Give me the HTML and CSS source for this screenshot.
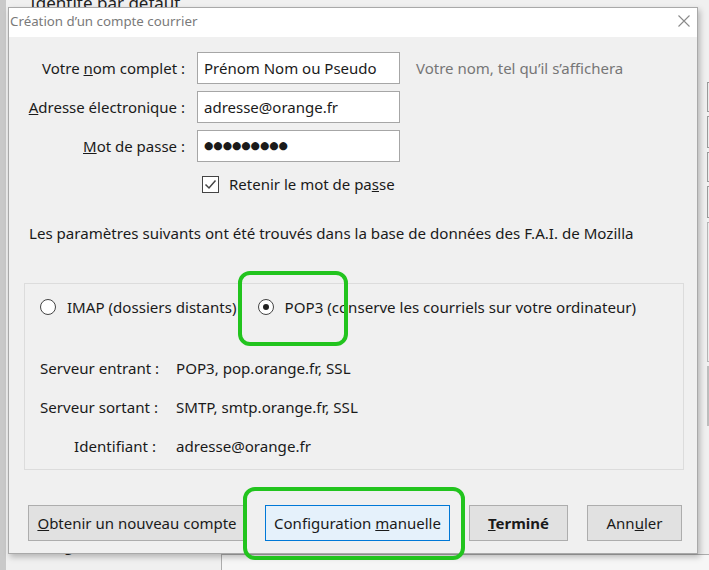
FILE: index.html
```html
<!DOCTYPE html>
<html lang="fr">
<head>
<meta charset="utf-8">
<title>Création d'un compte courrier</title>
<link rel="stylesheet" href="styles.css">
</head>
<body>
<div class="desktop">
  <div class="under">
    <div class="under-top">Identité par défaut</div>
    <div class="under-right">
      <div class="ubox b1"></div>
      <div class="ubox b2"></div>
      <div class="ubox b3"></div>
      <div class="ubox b4"></div>
      <div class="ubox b5"></div>
      <div class="ubox b6"></div>
    </div>
    <div class="under-bottom">
      <span class="ulabel">Si<u>g</u>nature (texte)</span>
      <div class="ufield"></div>
    </div>
  </div>

  <div class="dialog">
    <div class="titlebar">
      <span class="title">Création d’un compte courrier</span>
      <svg class="close" width="12" height="12" viewBox="0 0 12 12"><path d="M0.5 0.5 L11.5 11.5 M11.5 0.5 L0.5 11.5" stroke="#8a8a8a" stroke-width="1.1" fill="none"/></svg>
    </div>
    <div class="body">
      <div class="form">
        <label class="lbl">Votre <u>n</u>om complet :</label>
        <div class="input">Prénom Nom ou Pseudo</div>
        <span class="hint">Votre nom, tel qu’il s’affichera</span>
        <label class="lbl"><u>A</u>dresse électronique :</label>
        <div class="input">adresse@orange.fr</div>
        <span></span>
        <label class="lbl"><u>M</u>ot de passe :</label>
        <div class="input pw">●●●●●●●●●</div>
        <span></span>
      </div>
      <div class="checkrow">
        <span class="checkbox"><svg width="15" height="15" viewBox="0 0 15 15"><path d="M2.5 7.5 L6 11 L12.5 3.5" stroke="#444" stroke-width="1.5" fill="none"/></svg></span>
        <span>Retenir le mot de pa<u>s</u>se</span>
      </div>
      <p class="info">Les paramètres suivants ont été trouvés dans la base de données des F.A.I. de Mozilla</p>
      <div class="group">
        <div class="radios">
          <span class="radio"></span><span class="rtext">IMAP (dossiers distants)</span>
          <span class="radio on"></span><span class="rtext">POP3 (conserve les courriels sur votre ordinateur)</span>
        </div>
        <div class="details">
          <span class="dl">Serveur entrant :</span><span>POP3, pop.orange.fr, SSL</span>
          <span class="dl">Serveur sortant :</span><span>SMTP, smtp.orange.fr, SSL</span>
          <span class="dl">Identifiant :</span><span>adresse@orange.fr</span>
        </div>
      </div>
      <div class="buttons">
        <button class="btn wide"><u>O</u>btenir un nouveau compte</button>
        <button class="btn focus">Configuration <u>m</u>anuelle</button>
        <button class="btn bold"><u>T</u>erminé</button>
        <button class="btn">Ann<u>u</u>ler</button>
      </div>
    </div>
  </div>

  <div class="hl hl1"></div>
  <div class="hl hl2"></div>
</div>
</body>
</html>
```
FILE: styles.css
```css
* { box-sizing: border-box; }
html, body { margin: 0; padding: 0; }
body {
  width: 709px;
  height: 570px;
  overflow: hidden;
  font-family: "Noto Sans", "Open Sans", sans-serif;
  color: #1a1a1a;
  background: #cfcfcf;
}
.desktop {
  position: relative;
  width: 709px;
  height: 570px;
  overflow: hidden;
}
.under {
  position: absolute;
  left: 0; top: 0;
  width: 709px; height: 570px;
  background: #f0f0f0;
  border-left: 6px solid #c9c9c9;
}
.under-top {
  position: absolute;
  left: 24px; top: -9px;
  font-size: 17px;
  color: #222;
}
.under-right {
  position: absolute;
  left: 696px; top: 0;
  width: 13px; height: 570px;
  display: flex;
  flex-direction: column;
  gap: 4px;
  padding-top: 82px;
}
.ubox {
  margin-left: 5px;
  border: 1px solid #9a9a9a;
  border-right: none;
  background: #ececec;
}
.b1 { height: 30px; }
.b2 { height: 32px; }
.b3 { height: 30px; }
.b4 { height: 32px; }
.b5 { height: 140px; border-color: #b5b5b5; }
.b6 { height: 60px; background: #bdbdbd; border-color: #bdbdbd; }
.under-bottom {
  position: absolute;
  left: 6px; top: 532px;
  width: 703px;
  height: 38px;
  display: flex;
  align-items: flex-start;
}
.ulabel {
  width: 209px;
  padding-left: 40px;
  font-size: 15px;
  color: #222;
  line-height: 26px;
}
.ufield {
  flex: 1;
  margin-top: 22px;
  height: 22px;
  border: 1px solid #adadad;
  border-right: none;
  background: #f6f6f6;
}

.dialog {
  position: absolute;
  left: 8px; top: 7px;
  width: 690px; height: 547px;
  background: #f0f0f0;
  border: 1px solid #a9a9a9;
  box-shadow: 2px 3px 6px rgba(0,0,0,0.25);
  display: flex;
  flex-direction: column;
}
.titlebar {
  height: 29px;
  background: #fff;
  display: flex;
  align-items: center;
  justify-content: space-between;
  padding: 0 7px 3px 1px;
}
.title {
  font-size: 13.3px;
  color: #7a7a7a;
}
.body {
  flex: 1;
  padding: 15px 13px 0 15px;
  font-size: 15px;
}
.form {
  display: grid;
  grid-template-columns: 161px 203px auto;
  column-gap: 12px;
  row-gap: 7px;
  align-items: center;
}
.lbl { text-align: right; white-space: nowrap; }
.input {
  height: 32px;
  background: #fff;
  border: 1px solid #a6a6a6;
  padding: 0 6px;
  line-height: 30px;
  white-space: nowrap;
}
.input.pw { font-size: 10.8px; letter-spacing: -0.1px; font-family: "DejaVu Sans", sans-serif; }
.hint { color: #767676; padding-left: 4px; white-space: nowrap; }
.checkrow {
  display: flex;
  align-items: center;
  gap: 10px;
  margin: 12px 0 0 178px;
}
.checkbox {
  width: 17px; height: 17px;
  border: 1px solid #444;
  background: #fff;
  display: flex;
  align-items: center;
  justify-content: center;
}
.info {
  margin: 29px 0 0 5px;
  font-size: 15.1px;
  white-space: nowrap;
}
.group {
  margin-top: 40px;
  height: 187px;
  border: 1px solid #dcdcdc;
  background: #f0f0f0;
  padding: 13px 0 0 15px;
  font-size: 15.1px;
}
.radios {
  display: flex;
  align-items: center;
  height: 20px;
}
.radio {
  width: 16px; height: 16px;
  border-radius: 50%;
  border: 1px solid #444;
  background: #fff;
  position: relative;
  margin-right: 11px;
}
.radio.on::after {
  content: "";
  position: absolute;
  left: 4px; top: 4px;
  width: 6px; height: 6px;
  border-radius: 50%;
  background: #222;
}
.rtext { margin-right: 21px; white-space: nowrap; }
.details {
  display: grid;
  grid-template-columns: 116px auto;
  column-gap: 20px;
  row-gap: 19px;
  margin-top: 41px;
  line-height: 20px;
}
.dl { text-align: right; white-space: nowrap; }
.buttons {
  display: flex;
  gap: 19px;
  margin: 35px 0 0 4px;
}
.btn {
  height: 36px;
  padding: 0 8px;
  font: inherit;
  font-size: 15px;
  color: #1a1a1a;
  background: #e1e1e1;
  border: 1px solid #adadad;
  white-space: nowrap;
}
.btn.wide { width: 218px; }
.btn.focus { width: 185px; background: #e5f1fb; border-color: #0078d7; }
.btn.bold { width: 99px; font-weight: bold; }
.btn:last-child { width: 95px; }

.hl {
  position: absolute;
  border: 4px solid #22c41e;
  border-radius: 12px;
}
.hl1 { left: 238px; top: 271px; width: 110px; height: 75px; }
.hl2 { left: 243px; top: 487px; width: 222px; height: 73px; }
```
